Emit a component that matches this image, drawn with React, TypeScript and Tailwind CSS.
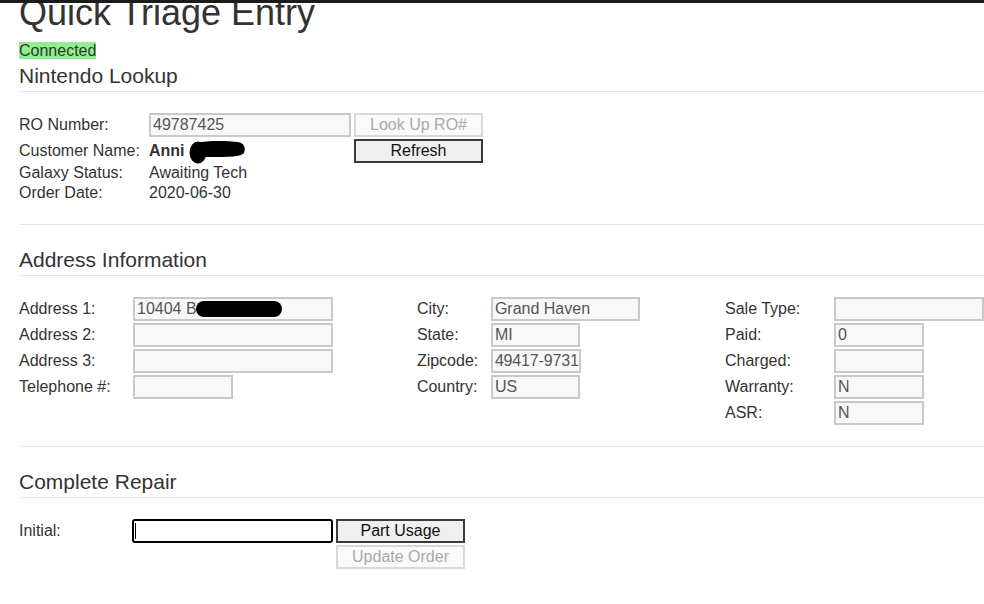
import React from "react";

function Field({ value = "", className = "" }: { value?: string; className?: string }) {
  return (
    <input
      readOnly
      value={value}
      className={`h-[24px] border-2 border-[#c9c9c9] bg-[#f8f8f8] pl-[2px] text-[16px] leading-[20px] text-[#555] outline-none ${className}`}
    />
  );
}

function Btn({ children, disabled = false }: { children: React.ReactNode; disabled?: boolean }) {
  return disabled ? (
    <button
      disabled
      className="h-[24px] w-[129px] border-2 border-[#d8d8d8] bg-[#fafafa] text-[16px] leading-[20px] text-[#a9a9a9]"
    >
      {children}
    </button>
  ) : (
    <button className="h-[24px] w-[129px] border-2 border-[#3a3a3a] bg-[#efefef] text-[16px] leading-[20px] text-[#111]">
      {children}
    </button>
  );
}

function SectionHead({ children }: { children: React.ReactNode }) {
  return (
    <h2 className="pt-[23px] pb-[3px] border-b border-[#e5e5e5] text-[21px] leading-[24px] font-normal">
      {children}
    </h2>
  );
}

function Row({ label, children }: { label: string; children: React.ReactNode }) {
  return (
    <>
      <div className="leading-[24px] h-[24px] whitespace-nowrap">{label}</div>
      <div className="h-[24px] flex">{children}</div>
    </>
  );
}

export default function App() {
  return (
    <div className="min-h-screen w-full overflow-hidden bg-white font-['Liberation_Sans',Arial,sans-serif] text-[16px] text-[#333]">
      <div className="h-[3px] bg-[#1b1b1b]" />
      <div className="pl-[19px]">
        <div className="h-[39px] overflow-hidden">
          <h1 className="mt-[-10px] text-[36px] leading-[40px] font-normal whitespace-nowrap">Quick Triage Entry</h1>
        </div>
        <div className="h-[17px] leading-[17px]">
          <span className="bg-[#90ee90] text-[#2c3a2c]">Connected</span>
        </div>
        <h2 className="pt-[5px] pb-[3px] border-b border-[#e5e5e5] text-[21px] leading-[24px] font-normal">
          Nintendo Lookup
        </h2>

        <div className="mt-[21px] flex flex-col">
          <div className="flex h-[24px]">
            <div className="w-[130px] leading-[24px]">RO Number:</div>
            <Field value="49787425" className="w-[202px]" />
            <div className="ml-[3px]">
              <Btn disabled>Look Up RO#</Btn>
            </div>
          </div>
          <div className="mt-[2px] flex h-[24px]">
            <div className="w-[130px] leading-[24px]">Customer Name:</div>
            <div className="w-[202px] flex items-center">
              <span className="font-bold leading-[24px]">Anni</span>
              <svg width="57" height="24" viewBox="0 0 57 24" className="ml-[4px] mt-[2px]">
                <ellipse cx="9" cy="12.5" rx="8.5" ry="11" fill="#000" />
                <path d="M7 3 C 20 0, 40 1, 49 2 C 55 3, 57 8, 55 13 C 52 17, 40 17, 20 17 L 7 17 Z" fill="#000" />
              </svg>
            </div>
            <div className="ml-[3px]">
              <Btn>Refresh</Btn>
            </div>
          </div>
          <div className="flex h-[20px] leading-[20px]">
            <div className="w-[130px]">Galaxy Status:</div>
            <div>Awaiting Tech</div>
          </div>
          <div className="flex h-[20px] leading-[20px]">
            <div className="w-[130px]">Order Date:</div>
            <div>2020-06-30</div>
          </div>
        </div>

        <section className="mt-[21px] border-t border-[#e5e5e5]">
          <SectionHead>Address Information</SectionHead>
          <div className="mt-[21px] flex">
            <div className="w-[399px] grid grid-cols-[114px_auto] gap-y-[2px] content-start">
              <Row label="Address 1:">
                <div className="relative">
                  <Field value="10404 B" className="w-[200px]" />
                  <span className="absolute left-[63px] top-[4px] h-[16px] w-[86px] rounded-full bg-black" />
                </div>
              </Row>
              <Row label="Address 2:">
                <Field className="w-[200px]" />
              </Row>
              <Row label="Address 3:">
                <Field className="w-[200px]" />
              </Row>
              <Row label="Telephone #:">
                <Field className="w-[100px]" />
              </Row>
            </div>
            <div className="w-[309px] grid grid-cols-[74px_auto] gap-y-[2px] content-start">
              <Row label="City:">
                <Field value="Grand Haven" className="w-[149px]" />
              </Row>
              <Row label="State:">
                <Field value="MI" className="w-[89px]" />
              </Row>
              <Row label="Zipcode:">
                <Field value="49417-9731" className="w-[90px] tracking-[-0.15px]" />
              </Row>
              <Row label="Country:">
                <Field value="US" className="w-[89px]" />
              </Row>
            </div>
            <div className="grid grid-cols-[109px_auto] gap-y-[2px] content-start">
              <Row label="Sale Type:">
                <Field className="w-[150px]" />
              </Row>
              <Row label="Paid:">
                <Field value="0" className="w-[90px]" />
              </Row>
              <Row label="Charged:">
                <Field className="w-[90px]" />
              </Row>
              <Row label="Warranty:">
                <Field value="N" className="w-[90px]" />
              </Row>
              <Row label="ASR:">
                <Field value="N" className="w-[90px]" />
              </Row>
            </div>
          </div>
        </section>

        <section className="mt-[21px] border-t border-[#e5e5e5]">
          <SectionHead>Complete Repair</SectionHead>
          <div className="mt-[21px] flex">
            <div className="w-[113px] leading-[24px]">Initial:</div>
            <div className="flex flex-col gap-[2px]">
              <div className="flex">
                <div className="h-[24px] w-[201px] rounded-[3px] border-2 border-black bg-white flex items-center pl-[1px]">
                  <span className="h-[16px] w-px bg-black" />
                </div>
                <div className="ml-[3px]">
                  <Btn>Part Usage</Btn>
                </div>
              </div>
              <div className="ml-[204px]">
                <Btn disabled>Update Order</Btn>
              </div>
            </div>
          </div>
        </section>
      </div>
    </div>
  );
}
